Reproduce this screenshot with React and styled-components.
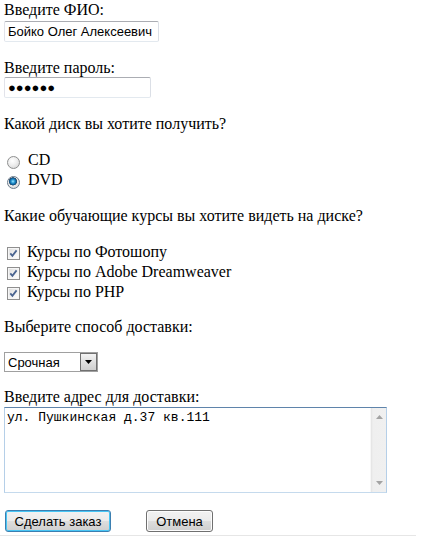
import React from "react";
import styled, { createGlobalStyle } from "styled-components";

const Global = createGlobalStyle`
  html, body { margin: 0; padding: 0; background: #fff; }
  body { font-family: "Liberation Serif", "Times New Roman", serif; font-size: 16px; color: #000; }
`;

const Page = styled.div`
  display: flex;
  flex-direction: column;
  align-items: flex-start;
`;

const Form = styled.form`
  display: flex;
  flex-direction: column;
  align-items: flex-start;
  padding-left: 4px;
`;

const Label = styled.label`
  display: block;
  line-height: 18px;
  height: 18px;
  margin-top: ${(p) => p.$mt || 0}px;
  white-space: nowrap;
`;

const TextInput = styled.input`
  box-sizing: border-box;
  width: ${(p) => p.$w}px;
  height: 21px;
  margin: ${(p) => p.$mt || 0}px 0 0 0;
  padding: 0 3px;
  border: 1px solid;
  border-color: #abadb3 #dbdfe6 #e3e9ef #e2e3ea;
  border-radius: 2px;
  font-family: "Liberation Sans", Arial, sans-serif;
  font-size: 13px;
  color: #000;
  background: #fff;
  outline: none;
`;

const Group = styled.div`
  display: flex;
  flex-direction: column;
  margin-top: ${(p) => p.$mt || 0}px;
`;

const Row = styled.label`
  display: flex;
  align-items: flex-start;
  height: 20px;
  line-height: 20px;
  padding-left: 3px;
  white-space: nowrap;
`;

const Radio = styled.input.attrs({ type: "radio" })`
  appearance: none;
  -webkit-appearance: none;
  box-sizing: border-box;
  width: 13px;
  height: 13px;
  margin: 6px 8px 0 0;
  border: 1px solid #8e8f8f;
  border-radius: 50%;
  background: radial-gradient(circle at 40% 35%, #ffffff 0%, #eeeeee 45%, #cfcfcf 100%);
  flex: none;
  &:checked {
    border-color: #6a7a8a;
    background:
      radial-gradient(circle at 45% 40%, #9fe6ff 0px, #2f9fd8 1.6px, #0b5d98 3.2px, #2e4e6a 3.9px, transparent 4.3px),
      radial-gradient(circle at 40% 35%, #ffffff 0%, #eeeeee 45%, #cfcfcf 100%);
  }
`;

const BoxWrap = styled.span`
  position: relative;
  box-sizing: border-box;
  width: 13px;
  height: 13px;
  margin: 5px 7px 0 0;
  border: 1px solid #8f8f8f;
  background: linear-gradient(135deg, #dcdcdc 0%, #f4f4f4 60%, #ffffff 100%);
  box-shadow: inset 0 0 0 1px #f6f6f6;
  flex: none;
  display: flex;
  align-items: center;
  justify-content: center;
`;

const HiddenCheck = styled.input.attrs({ type: "checkbox" })`
  position: absolute;
  inset: 0;
  margin: 0;
  opacity: 0;
`;

const Check = ({ defaultChecked }) => (
  <BoxWrap>
    <HiddenCheck defaultChecked={defaultChecked} />
    <svg width="11" height="11" viewBox="0 0 11 11">
      <path d="M2.3 5.4 L4.4 7.8 L8.6 2.4" fill="none" stroke="#4a6490" strokeWidth="1.8" strokeLinejoin="miter" />
    </svg>
  </BoxWrap>
);

const SelectBox = styled.div`
  box-sizing: border-box;
  display: flex;
  width: 94px;
  height: 20px;
  margin-top: ${(p) => p.$mt || 0}px;
  border: 1px solid #a0a0a0;
  background: #fff;
`;

const Select = styled.select`
  appearance: none;
  -webkit-appearance: none;
  flex: 1;
  min-width: 0;
  height: 100%;
  border: none;
  margin: 0;
  padding: 0 0 0 3px;
  background: transparent;
  font-family: "Liberation Sans", Arial, sans-serif;
  font-size: 13px;
  color: #000;
  outline: none;
`;

const ArrowBtn = styled.span`
  box-sizing: border-box;
  width: 17px;
  height: 18px;
  border: 1px solid #707070;
  background: linear-gradient(#f4f4f4, #dedede 55%, #cfcfcf);
  display: flex;
  align-items: center;
  justify-content: center;
  flex: none;
`;

const AreaBox = styled.div`
  box-sizing: border-box;
  display: flex;
  width: 383px;
  height: 86px;
  margin-top: ${(p) => p.$mt || 0}px;
  border: 1px solid;
  border-color: #5f84ab #b5cfe8 #c5daed #b5cfe8;
  background: #fff;
`;

const TextArea = styled.textarea`
  flex: 1;
  min-width: 0;
  border: none;
  margin: 0;
  padding: 2px 2px;
  resize: none;
  overflow: hidden;
  font-family: "Liberation Mono", "Courier New", monospace;
  font-size: 13px;
  line-height: 15px;
  color: #000;
  outline: none;
`;

const ScrollTrack = styled.div`
  width: 16px;
  flex: none;
  display: flex;
  flex-direction: column;
  justify-content: space-between;
  align-items: center;
  padding: 7px 0 7px 1px;
  box-sizing: border-box;
  background: linear-gradient(to right, #e3e3e3 0, #efefef 2px, #f0f0f0 100%);
  border-left: 1px solid #f7f7f7;
`;

const ButtonRow = styled.div`
  display: flex;
  gap: 35px;
  padding-left: 1px;
  margin-top: ${(p) => p.$mt || 0}px;
`;

const Button = styled.button`
  box-sizing: border-box;
  width: ${(p) => p.$w}px;
  height: 22px;
  margin: 0;
  padding: 0;
  border: 1px solid ${(p) => (p.$primary ? "#3c7fb1" : "#707070")};
  border-radius: 3px;
  background: linear-gradient(#f2f2f2 0%, #ebebeb 50%, #dddddd 51%, #cfcfcf 100%);
  box-shadow: ${(p) => (p.$primary ? "inset 0 0 0 1px #48c6f5" : "inset 0 0 0 1px #fcfcfc")};
  font-family: "Liberation Sans", Arial, sans-serif;
  font-size: 13px;
  color: #000;
  cursor: pointer;
`;

const Divider = styled.div`
  width: 416px;
  height: 1px;
  margin-top: 3px;
  background: #e6e6e6;
`;

export default function App() {
  return (
    <Page>
      <Global />
      <Form onSubmit={(e) => e.preventDefault()}>
        <Label $mt={1} htmlFor="fio">Введите ФИО:</Label>
        <TextInput id="fio" $mt={2} $w={155} type="text" defaultValue="Бойко Олег Алексеевич" />
        <Label $mt={17} htmlFor="pwd">Введите пароль:</Label>
        <TextInput id="pwd" $w={147} type="text" readOnly value="●●●●●●" />
        <Label $mt={17}>Какой диск вы хотите получить?</Label>
        <Group $mt={17}>
          <Row><Radio name="disk" value="cd" />CD</Row>
          <Row><Radio name="disk" value="dvd" defaultChecked />DVD</Row>
        </Group>
        <Label $mt={17}>Какие обучающие курсы вы хотите видеть на диске?</Label>
        <Group $mt={17}>
          <Row><Check defaultChecked />Курсы по Фотошопу</Row>
          <Row><Check defaultChecked />Курсы по Adobe Dreamweaver</Row>
          <Row><Check defaultChecked />Курсы по PHP</Row>
        </Group>
        <Label $mt={16}>Выберите способ доставки:</Label>
        <SelectBox $mt={16}>
          <Select defaultValue="urgent">
            <option value="urgent">Срочная</option>
            <option value="normal">Обычная</option>
          </Select>
          <ArrowBtn>
            <svg width="7" height="4" viewBox="0 0 7 4"><path d="M0 0 H7 L3.5 4 Z" fill="#000" /></svg>
          </ArrowBtn>
        </SelectBox>
        <Label $mt={16} htmlFor="addr">Введите адрес для доставки:</Label>
        <AreaBox $mt={1}>
          <TextArea id="addr" defaultValue="ул. Пушкинская д.37 кв.111" />
          <ScrollTrack>
            <svg width="7" height="4" viewBox="0 0 7 4"><path d="M0 4 H7 L3.5 0 Z" fill="#a3a3a3" /></svg>
            <svg width="7" height="4" viewBox="0 0 7 4"><path d="M0 0 H7 L3.5 4 Z" fill="#a3a3a3" /></svg>
          </ScrollTrack>
        </AreaBox>
        <ButtonRow $mt={17}>
          <Button $primary $w={106} type="submit">Сделать заказ</Button>
          <Button $w={67} type="reset">Отмена</Button>
        </ButtonRow>
      </Form>
      <Divider />
    </Page>
  );
}
